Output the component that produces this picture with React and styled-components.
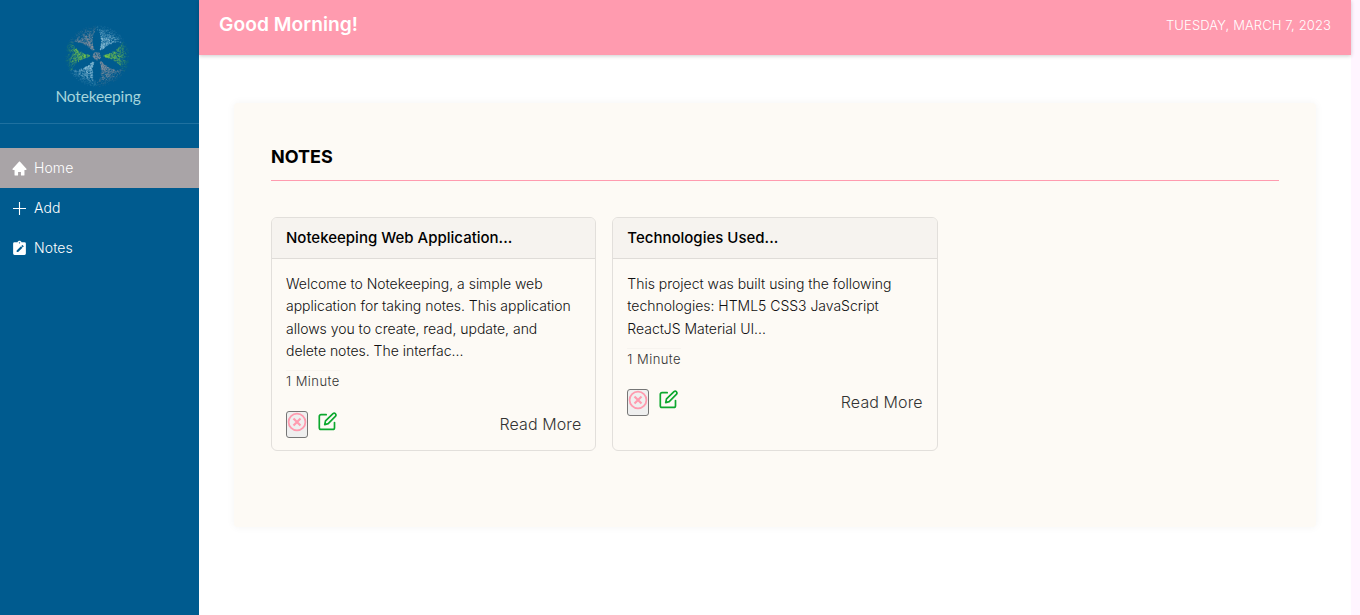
import React from "react";
import styled, { createGlobalStyle } from "styled-components";
import { BiSolidHome } from "react-icons/bi";

const GlobalStyle = createGlobalStyle`
  * { box-sizing: border-box; }
  html, body { margin: 0; padding: 0; background: #fff5ff; }
  body { font-family: Inter, "Liberation Sans", sans-serif; font-weight: 300; overflow: hidden; }
  h1, h2, h3, p { margin: 0; }
`;

const Page = styled.div`
  display: flex;
  width: 1351px;
  height: 100vh;
  background: #fff;
`;

const Sidebar = styled.aside`
  width: 199px;
  flex: none;
  background: #005b8f;
  color: #fff;
`;

const Brand = styled.div`
  height: 124px;
  padding-top: 20px;
  border-bottom: 1px solid #1f71a0;
  display: flex;
  flex-direction: column;
  align-items: center;
`;

const Emblem = styled.svg`
  display: block;
  width: 72px;
  height: 72px;
  margin-right: 5px;
`;

const BrandName = styled.span`
  margin: -6px 3px 0 0;
  font-family: Lato, sans-serif;
  font-weight: 400;
  font-size: 15.5px;
  line-height: 20px;
  letter-spacing: ${(p) => p.$tracking};
  color: #a5d5dc;
`;

const Nav = styled.nav`
  margin-top: 24px;
`;

const NavItem = styled.a`
  display: flex;
  align-items: center;
  gap: 6px;
  height: 40px;
  padding-left: 11px;
  font-size: 14px;
  line-height: 16px;
  letter-spacing: 0.1px;
  color: #fff;
  background: ${(p) => (p.$active ? "#a9a4a7" : "transparent")};
  svg { width: 17px; height: 17px; flex: none; }
`;

const Main = styled.main`
  flex: 1;
  min-width: 0;
`;

const TopBar = styled.header`
  display: flex;
  justify-content: space-between;
  height: 55px;
  padding: 12px 20px 0 20px;
  background: #ff9baf;
  color: #fff;
  box-shadow: 0 1px 4px rgba(0, 0, 0, 0.2);
`;

const Greeting = styled.h1`
  font-size: 19.2px;
  line-height: 25px;
  font-weight: 600;
  letter-spacing: 0.05px;
`;

const Today = styled.span`
  font-size: 13px;
  line-height: 27px;
  letter-spacing: 0.12px;
  text-transform: uppercase;
`;

const Panel = styled.section`
  height: 424px;
  margin: 48px 35px 0 35px;
  padding: 43px 37px 0;
  background: #fdfaf5;
  border-radius: 4px;
  box-shadow: 0 0 8px rgba(0, 0, 0, 0.05);
`;

const PanelTitle = styled.h2`
  height: 35px;
  font-size: 18px;
  line-height: 22px;
  font-weight: 700;
  border-bottom: 1px solid #ff9baf;
`;

const NoteGrid = styled.div`
  display: grid;
  grid-template-columns: repeat(3, 1fr);
  gap: 16px;
  margin-top: 36px;
`;

const Card = styled.article`
  height: 234px;
  border: 1px solid #e2dfdb;
  border-radius: 6px;
  overflow: hidden;
`;

const CardTitle = styled.h3`
  height: 41px;
  padding: 0 14px;
  border-bottom: 1px solid #dfdcd8;
  background: #f6f3ef;
  font-size: 15px;
  line-height: 40px;
  font-weight: 500;
`;

const CardBody = styled.div`
  padding: 14px 14px 0;
`;

const Excerpt = styled.p`
  padding-right: 6px;
  font-size: 14px;
  line-height: 22.4px;
  letter-spacing: -0.02px;
  color: #111;
`;

const ReadTime = styled.span`
  display: block;
  width: fit-content;
  margin-top: 7.8px;
  border-top: 1px solid #f7f4ef;
  font-size: 13px;
  line-height: 20px;
  letter-spacing: 0.45px;
  color: #333;
`;

const CardFooter = styled.div`
  display: flex;
  align-items: flex-start;
  margin-top: 19.7px;
`;

const DeleteButton = styled.button`
  width: 22px;
  height: 27px;
  padding: 0;
  border: 1px solid #767676;
  border-radius: 3px;
  background: #efefef;
  color: #ff9baf;
  svg { display: block; width: 20px; height: 20px; margin-top: -5px; }
`;

const EditLink = styled.a`
  margin-left: 8px;
  color: #0da82f;
  svg { display: block; width: 22px; height: 22px; }
`;

const ReadMore = styled.a`
  margin-left: auto;
  font-size: 16px;
  line-height: 27px;
  letter-spacing: ${(p) => p.$tracking};
  color: #333;
`;

// Scatter particles in six fans separated by clear leaf-shaped gaps.
const FANS = ["#7ccb4b", "#9fcde2", "#9b99a0", "#7ccb4b", "#9fcde2", "#9b99a0"];
const makeParticles = () => {
  let seed = 41;
  const random = () => {
    seed = (seed * 16807) % 2147483647;
    return seed / 2147483647;
  };
  const dots = [];
  FANS.forEach((color, fan) => {
    for (let i = 0; i < 420; i += 1) {
      const r = 7 + Math.pow(random(), 0.7) * 25;
      const gap = 4.3 * Math.sqrt(Math.max(0, 1 - Math.pow((r - 16) / 11.5, 2)));
      const half = Math.max(0.04, Math.PI / 6 - Math.asin(Math.min(0.48, gap / r)));
      const angle = (fan * Math.PI) / 3 + (random() * 2 - 1) * half;
      const fade = r < 22 ? 0.55 : Math.max(0.1, 0.55 - (r - 22) * 0.05);
      dots.push({
        x: 36 + r * Math.cos(angle),
        y: 36 - r * Math.sin(angle) * 0.95,
        color,
        opacity: fade * (0.4 + random() * 0.6),
      });
    }
  });
  for (let i = 0; i < 75; i += 1) {
    const r = Math.sqrt(random()) * 3.9;
    const a = random() * Math.PI * 2;
    dots.push({ x: 36 + r * Math.cos(a), y: 36 + r * Math.sin(a), color: "#8d929c", opacity: 0.6 });
  }
  return dots;
};
const PARTICLES = makeParticles();

const Logo = () => (
  <Emblem viewBox="0 0 72 72">
    {PARTICLES.map((d, i) => (
      <circle key={i} cx={d.x} cy={d.y} r="0.58" fill={d.color} opacity={d.opacity} />
    ))}
  </Emblem>
);

const PlusIcon = () => (
  <svg viewBox="0 0 17 17" fill="none" stroke="currentColor" strokeWidth="1.1">
    <path d="M8.5 2v13M2 8.5h13" />
  </svg>
);

const ClipboardEditIcon = () => (
  <svg viewBox="0 0 24 24" fill="currentColor">
    <path d="M19 3h-4.18C14.4 1.84 13.3 1 12 1s-2.4.84-2.82 2H5a2 2 0 0 0-2 2v14a2 2 0 0 0 2 2h14a2 2 0 0 0 2-2V5a2 2 0 0 0-2-2m-7 0a1 1 0 0 1 1 1 1 1 0 0 1-1 1 1 1 0 0 1-1-1 1 1 0 0 1 1-1m-1.9 14H8v-2.1l6.1-6.1 2.1 2.1zm7.6-7.6-1 1-2.1-2.1 1-1c.2-.2.6-.2.8 0l1.3 1.3c.2.2.2.6 0 .8" />
  </svg>
);

const CircleXIcon = () => (
  <svg viewBox="0 0 20 20" fill="none" stroke="currentColor">
    <circle cx="10" cy="10" r="8.4" strokeWidth="1.8" />
    <path d="m6.5 6.5 7 7m0-7-7 7" strokeWidth="2.2" />
  </svg>
);

const EditIcon = () => (
  <svg viewBox="0 0 22 22" fill="none" stroke="currentColor" strokeWidth="1.7" strokeLinejoin="round" strokeLinecap="round">
    <path d="M10.2 3.7H5a1.7 1.7 0 0 0-1.7 1.7v11.3A1.7 1.7 0 0 0 5 18.4h11.8a1.7 1.7 0 0 0 1.7-1.7v-5.2" />
    <path d="m8.7 13.6.8-3.7 7.5-7.3a1.85 1.85 0 0 1 2.6 2.6l-7.4 7.4z" />
  </svg>
);

const NOTES = [
  {
    title: "Notekeeping Web Application...",
    text: "Welcome to Notekeeping, a simple web application for taking notes. This application allows you to create, read, update, and delete notes. The interfac...",
  },
  {
    title: "Technologies Used...",
    text: "This project was built using the following technologies: HTML5 CSS3 JavaScript ReactJS Material UI...",
  },
];

const NoteCard = ({ title, text }) => (
  <Card>
    <CardTitle>{title}</CardTitle>
    <CardBody>
      <Excerpt>{text}</Excerpt>
      <ReadTime>1 Minute</ReadTime>
      <CardFooter>
        <DeleteButton aria-label="Delete"><CircleXIcon /></DeleteButton>
        <EditLink><EditIcon /></EditLink>
        <ReadMore $tracking="0.1px">Read More</ReadMore>
      </CardFooter>
    </CardBody>
  </Card>
);

export default function App() {
  return (
    <Page>
      <GlobalStyle />
      <Sidebar>
        <Brand>
          <Logo />
          <BrandName $tracking="-0.15px">Notekeeping</BrandName>
        </Brand>
        <Nav>
          <NavItem $active><BiSolidHome />Home</NavItem>
          <NavItem><PlusIcon />Add</NavItem>
          <NavItem><ClipboardEditIcon />Notes</NavItem>
        </Nav>
      </Sidebar>
      <Main>
        <TopBar>
          <Greeting>Good Morning!</Greeting>
          <Today>Tuesday, March 7, 2023</Today>
        </TopBar>
        <Panel>
          <PanelTitle>NOTES</PanelTitle>
          <NoteGrid>
            {NOTES.map((note) => <NoteCard key={note.title} {...note} />)}
          </NoteGrid>
        </Panel>
      </Main>
    </Page>
  );
}
